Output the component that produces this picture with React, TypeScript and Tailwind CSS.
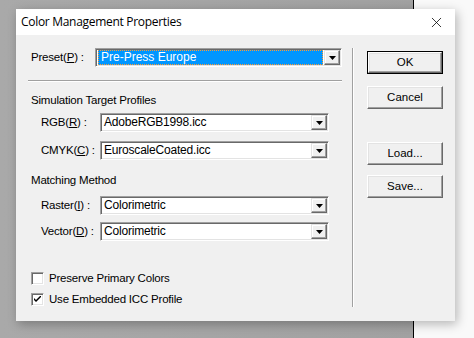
import { X } from "lucide-react";

const ui = { fontFamily: '"Liberation Sans", Arial, sans-serif' };

function Arrow() {
  return (
    <div className="w-[16px] h-[15px] flex items-center justify-center bg-[#f0f0f0] border-t border-l border-t-[#e3e3e3] border-l-[#e3e3e3] border-r border-b border-r-[#696969] border-b-[#696969] shadow-[inset_-1px_-1px_0_#a0a0a0,inset_1px_1px_0_#ffffff]">
      <svg width="7" height="4" viewBox="0 0 7 4">
        <path d="M0 0h7L3.5 4z" fill="#000" />
      </svg>
    </div>
  );
}

function Combo({ value, width, selected }: { value: string; width: number; selected?: boolean }) {
  return (
    <div
      className="h-[19px] flex items-center bg-white border-t border-l border-t-[#a0a0a0] border-l-[#a0a0a0] border-r border-b border-r-[#ffffff] border-b-[#ffffff] shadow-[inset_1px_1px_0_#696969,inset_-1px_-1px_0_#e3e3e3]"
      style={{ width }}
    >
      <div className="flex-1 h-full flex items-center pl-[2px] pr-[1px] py-[2px]">
        {selected ? (
          <div className="w-full h-[15px] bg-[#0096ff] text-white text-[12px] leading-[13px] pl-[2px] border border-dotted border-[#ff9a30]">
            {value}
          </div>
        ) : (
          <span className="text-[12px] leading-[15px] text-black pl-[1px] tracking-[-0.2px]">{value}</span>
        )}
      </div>
      <div className="pr-[1px]">
        <Arrow />
      </div>
    </div>
  );
}

function Btn({ label, def }: { label: string; def?: boolean }) {
  return (
    <div className={`w-[76px] h-[23px] ${def ? "border border-black" : ""}`}>
      <div className="w-full h-full flex items-center justify-center bg-[#f0f0f0] border-t border-l border-t-white border-l-white border-r border-b border-r-[#696969] border-b-[#696969] shadow-[inset_-1px_-1px_0_#a0a0a0,inset_1px_1px_0_#e3e3e3] text-[11.5px] text-black">
        {label}
      </div>
    </div>
  );
}

function U({ c }: { c: string }) {
  return <span className="underline underline-offset-[1px]">{c}</span>;
}

function Row({ label, children }: { label: React.ReactNode; children: React.ReactNode }) {
  return (
    <div className="flex items-center">
      <div className="w-[72px] pl-[13px] text-[11.5px] text-black tracking-[-0.2px]">{label}</div>
      {children}
    </div>
  );
}

function Check({ label, checked }: { label: string; checked?: boolean }) {
  return (
    <div className="h-[13px] flex items-center gap-[5px]">
      <div className="w-[13px] h-[13px] bg-white border-t border-l border-t-[#a0a0a0] border-l-[#a0a0a0] border-r border-b border-r-white border-b-white shadow-[inset_1px_1px_0_#696969,inset_-1px_-1px_0_#e3e3e3] flex items-center justify-center">
        {checked && (
          <svg width="7" height="7" viewBox="0 0 7 7">
            <path d="M0 2l2 2 5-5v2l-5 5-2-2z" fill="#000" />
          </svg>
        )}
      </div>
      <span className="text-[11.5px] text-black tracking-[-0.2px]">{label}</span>
    </div>
  );
}

export default function App() {
  return (
    <div className="relative w-[474px] h-[338px] overflow-hidden flex" style={ui}>
      <div className="w-[413px] h-full bg-gradient-to-r from-[#a9a9a9] to-[#a1a1a1]" />
      <div className="w-[1px] h-full bg-black" />
      <div className="flex-1 h-full bg-[#f9f9f9]" />

      <div className="absolute left-[16px] top-[9px] w-[439px] h-[312px] flex flex-col bg-[#f0f0f0] shadow-[2px_3px_10px_rgba(0,0,0,0.28)]">
        <div className="h-[26px] bg-white flex items-center justify-between pl-[5px] pr-[10px]">
          <span className="text-[12px] text-black tracking-[-0.3px]" style={{ fontFamily: '"Open Sans", "Noto Sans", sans-serif' }}>
            Color Management Properties
          </span>
          <X size={17} strokeWidth={1.1} color="#000" />
        </div>

        <div className="flex flex-1">
          <div className="w-[336px] pl-[12px] pr-[10px] pt-[13px] flex flex-col">
            <div className="flex items-center">
              <div className="w-[67px] pl-[3px] text-[11.5px] text-black tracking-[-0.2px]">
                Preset(<U c="P" />) :
              </div>
              <Combo value="Pre-Press Europe" width={247} selected />
            </div>
            <div className="mt-[13px] h-[2px] border-t border-[#a0a0a0] border-b border-b-white" />

            <div className="mt-[11px] pl-[3px] text-[11.5px] leading-[14px] text-black tracking-[-0.2px]">Simulation Target Profiles</div>
            <div className="mt-[6px] flex flex-col gap-[9px]">
              <Row label={<>RGB(<U c="R" />) :</>}>
                <Combo value="AdobeRGB1998.icc" width={229} />
              </Row>
              <Row label={<>CMYK(<U c="C" />) :</>}>
                <Combo value="EuroscaleCoated.icc" width={229} />
              </Row>
            </div>

            <div className="mt-[13px] pl-[3px] text-[11.5px] leading-[14px] text-black tracking-[-0.2px]">Matching Method</div>
            <div className="mt-[9px] flex flex-col gap-[7px]">
              <Row label={<>Raster(<U c="I" />) :</>}>
                <Combo value="Colorimetric" width={229} />
              </Row>
              <Row label={<>Vector(<U c="D" />) :</>}>
                <Combo value="Colorimetric" width={229} />
              </Row>
            </div>

            <div className="mt-[31px] pl-[3px] flex flex-col gap-[8px]">
              <Check label="Preserve Primary Colors" />
              <Check label="Use Embedded ICC Profile" checked />
            </div>
          </div>

          <div className="mt-[13px] w-[2px] h-[259px] border-l border-[#a0a0a0] border-r border-r-white" />

          <div className="pl-[13px] pt-[16px] flex flex-col">
            <Btn label="OK" def />
            <div className="mt-[12px]">
              <Btn label="Cancel" />
            </div>
            <div className="mt-[33px]">
              <Btn label="Load..." />
            </div>
            <div className="mt-[10px]">
              <Btn label="Save..." />
            </div>
          </div>
        </div>
      </div>
    </div>
  );
}
